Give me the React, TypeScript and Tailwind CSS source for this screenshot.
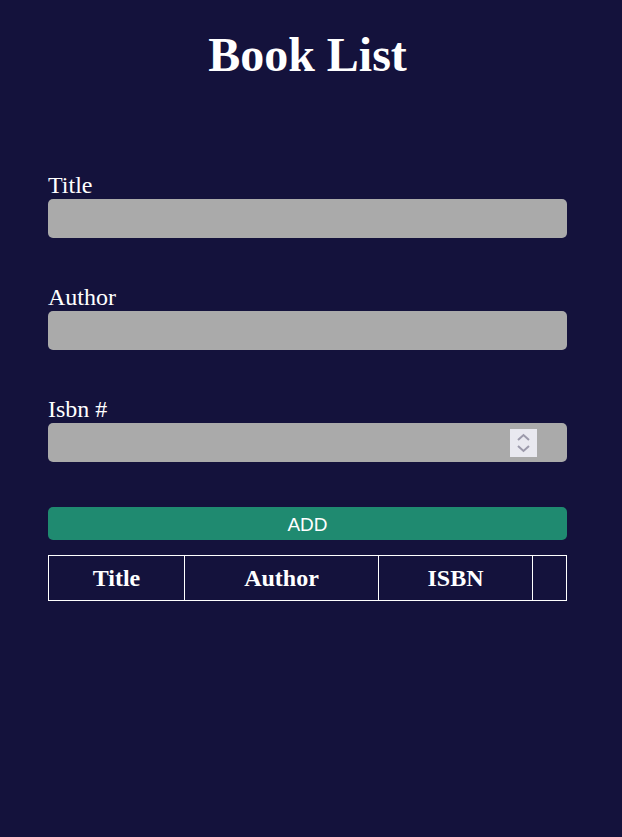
const fields = [
  { label: "Title", type: "text" },
  { label: "Author", type: "text" },
  { label: "Isbn #", type: "number" },
];

const SpinBox = () => (
  <div className="absolute right-[30px] top-[6px] h-[28px] w-[27px] bg-[#e9e9f0]">
    <svg width="27" height="28" viewBox="0 0 27 28" fill="none">
      <path d="M8 11 L13.5 6 L19 11" stroke="#9c9aab" strokeWidth="2" />
      <path d="M8 17 L13.5 22 L19 17" stroke="#9c9aab" strokeWidth="2" />
    </svg>
  </div>
);

const App = () => {
  return (
    <section className="min-h-[837px] w-full bg-[#14123c] font-['Liberation_Serif',serif] text-white">
      <div className="ml-[48px] w-[519px] pt-[27px]">
        <h1 className="text-center text-[48px] font-bold leading-[55px]">Book List</h1>
        <form className="mt-[89px] flex flex-col gap-[45px]" onSubmit={(e) => e.preventDefault()}>
          {fields.map((f) => (
            <div key={f.label} className="flex flex-col">
              <label className="text-[24px] leading-[28px]">{f.label}</label>
              <div className="relative">
                <input
                  type={f.type}
                  className="block h-[39px] w-full rounded-[5px] bg-[#aaaaaa] px-3 text-black outline-none [appearance:textfield] [&::-webkit-inner-spin-button]:appearance-none"
                />
                {f.type === "number" && <SpinBox />}
              </div>
            </div>
          ))}
          <button className="flex h-[33px] w-full items-center justify-center rounded-[5px] bg-[#1f8a70] pt-[2px] font-['Liberation_Sans',Arial,sans-serif] text-[19px] leading-none text-white">
            ADD
          </button>
        </form>
        <table className="mt-[15px] w-full border-collapse">
          <thead>
            <tr className="h-[45px] text-[24px] font-bold">
              <th className="w-[136px] border border-white">Title</th>
              <th className="w-[194px] border border-white">Author</th>
              <th className="w-[154px] border border-white">ISBN</th>
              <th className="border border-white"></th>
            </tr>
          </thead>
          <tbody></tbody>
        </table>
      </div>
    </section>
  );
};

export default App;
